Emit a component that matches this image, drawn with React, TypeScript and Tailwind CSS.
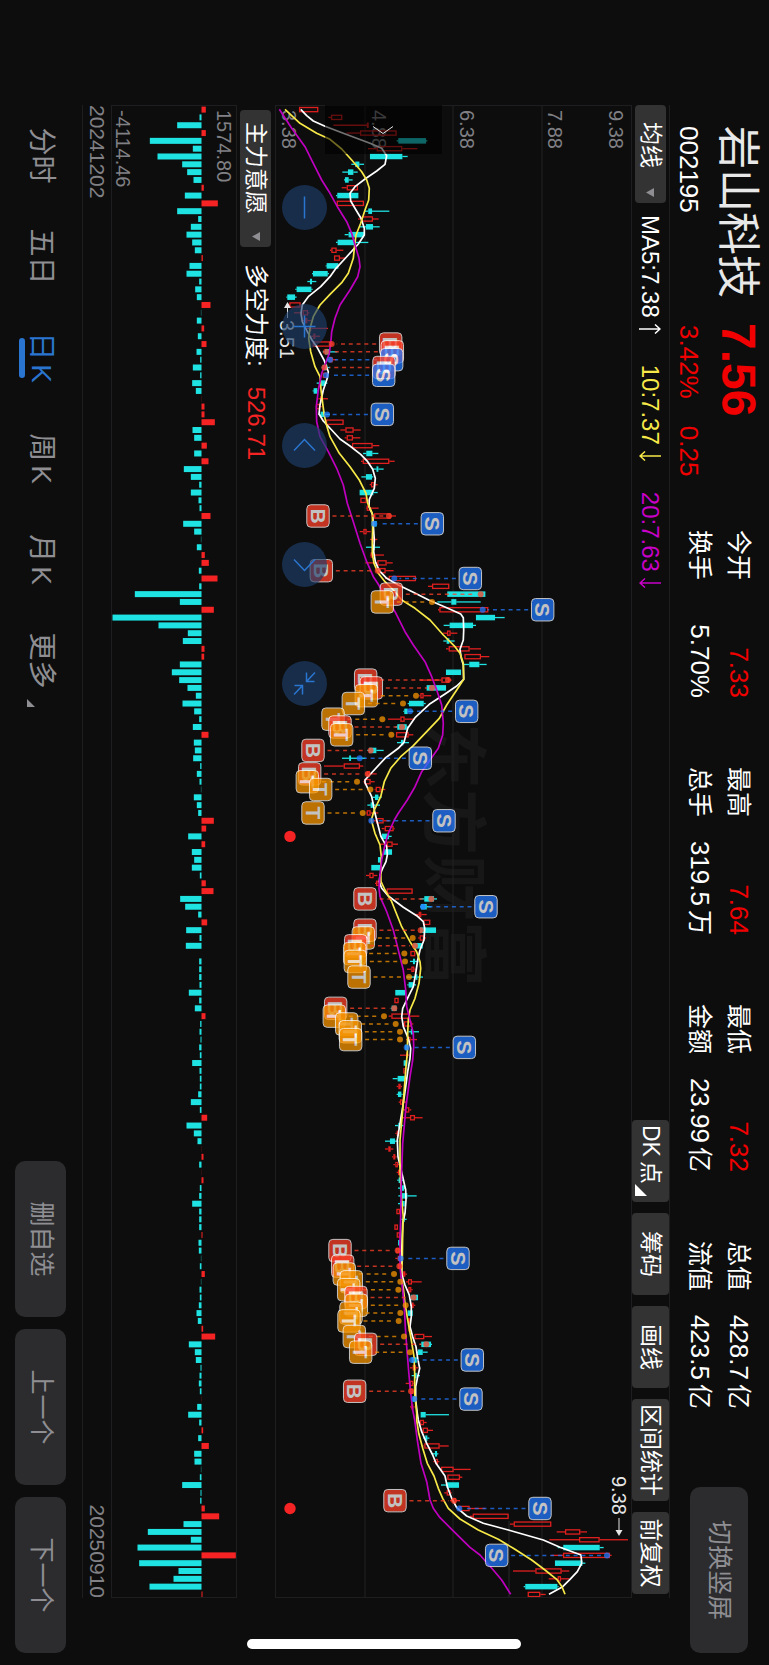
import type { ReactNode } from 'react';

type Kind = 'B' | 'S' | 'T';

const STEP = 7.815;
const CHART_W = 1493;
const CHART_H = 357;
const at = (i: number) => 4.6 + STEP * i;
const level = (p: number) => 362 - p / 3;

const UP = '#e01f1f';
const DOWN = '#1fe3e3';

// Each candle: direction, body low, body high, wick low, wick high.
const candles = `
r 87 145 87 145|r 183 217 175 217|r 292 296 190 296|r 270 380 230 380|c 385 468 380 472|r 320 397 294 442|c 300 397 300 413|c 256 268 244 282|c 234 250 217 263|c 225 236 222 248
r 230 264 215 264|c 202 265 198 265|r 200 282 200 282|c 295 306 282 358|r 275 309 264 326|c 288 309 270 329|c 236 282 224 282|c 203 257 198 295|r 184 200 180 220|r 192 210 192 226
c 170 205 167 205|c 129 173 126 177|c 120 126 112 139|c 80 124 76 128|c 52 75 49 80|r 58 92 48 92|r 98 114 72 118|r 105 112 95 123|r 120 124 110 174|r 130 136 124 150
r 128 184 128 190|c 165 180 158 202|r 178 188 170 200|c 158 172 155 180|r 158 172 158 172|c 152 166 140 172|c 131 142 128 144|r 152 156 145 174|r 138 150 138 155|c 152 165 145 180
r 168 221 168 221|r 226 251 211 272|r 230 249 224 271|r 246 308 246 328|c 289 307 279 325|r 278 358 273 374|c 320 325 308 341|c 288 306 274 310|r 303 314 299 323|c 269 310 269 323
r 271 290 271 296|r 290 300 288 326|r 312 362 305 378|c 305 320 305 320|r 280 290 269 302|r 308 315 300 322|c 308 314 288 330|r 302 308 300 342|r 322 350 286 368|r 328 347 318 371
r 356 438 345 438|r 486 538 474 538|c 532 646 532 646|c 544 559 502 632|r 508 655 504 655|c 618 675 618 704|c 539 609 521 618|r 531 542 519 562|c 530 538 520 554|r 536 599 528 633
r 583 633 583 658|c 598 628 582 650|c 528 573 528 573|r 514 538 450 545|c 470 528 470 528|r 451 461 448 484|c 417 461 413 467|c 403 413 400 430|r 391 404 354 434|c 382 410 376 415
r 378 416 378 430|c 393 400 381 417|c 297 319 292 341|c 238 243 216 286|r 221 270 162 280|r 290 300 285 320|r 283 302 280 314|r 317 332 314 346|c 315 325 308 335|c 302 312 292 330
r 290 302 288 325|r 318 341 298 358|r 344 371 335 374|c 336 357 333 365|r 350 368 330 384|c 340 366 340 366|c 324 334 324 334|c 304 330 304 330|r 298 311 288 322|r 318 326 315 333
r 350 428 350 428|c 463 492 450 501|c 453 470 450 484|r 446 454 433 470|r 460 481 460 481|c 450 498 450 498|r 449 462 445 468|c 430 458 430 458|r 421 436 421 436|c 429 435 420 445
r 424 433 411 437|c 437 442 410 459|c 416 430 412 438|c 376 405 376 405|r 373 386 373 386|c 365 380 362 380|r 364 420 356 448|r 402 425 398 430|c 424 428 415 447|r 414 422 408 441
c 405 415 405 415|r 408 414 390 418|c 401 412 401 412|r 400 408 400 408|c 383 404 368 408|r 385 392 380 396|c 384 394 380 398|r 390 400 386 408|r 405 418 398 424|r 420 435 395 458
c 385 395 375 400|r 380 388 376 392|c 360 375 345 385|r 355 362 345 370|r 370 376 366 380|r 376 384 370 390|r 384 390 380 394|c 386 396 382 400|c 390 402 384 408|c 396 412 385 440
c 390 404 384 404|r 379 390 379 390|c 398 404 394 410|r 373 384 373 384|r 380 390 380 390|c 385 390 385 390|r 378 388 378 388|r 383 392 376 398|r 384 392 384 392|r 399 406 394 411
r 414 426 408 455|r 415 424 408 428|c 423 444 423 444|r 427 431 420 436|c 413 428 413 428|r 414 420 414 420|r 415 421 415 421|r 433 463 433 486|c 454 483 450 486|c 444 458 440 473
c 425 440 425 440|r 428 438 420 445|c 433 440 425 450|r 420 430 407 435|r 420 430 420 430|c 428 438 428 438|r 424 430 420 434|c 452 467 452 537|r 450 462 446 470|r 458 474 452 489
c 466 472 460 478|r 463 509 460 536|c 495 501 487 505|r 496 504 490 508|r 513 551 513 602|r 532 570 532 577|c 530 567 513 567|r 530 542 523 545|r 548 558 540 570|r 568 599 568 646
r 608 716 600 716|r 731 844 720 844|r 885 931 860 951|r 927 989 838 1074|c 880 989 863 1001|r 879 1020 844 1025|c 855 937 855 946|r 796 875 729 898|r 863 873 836 898|c 766 862 761 866
r 773 811 773 827`
  .trim()
  .split(/[|\n]/)
  .map((row) => {
    const [dir, ...n] = row.split(' ');
    return { up: dir === 'r', v: n.map(Number) };
  });

const strength = [
  13, -6, -73, 13, -155, -26, -132, -58, -43, -24, 7, -50, 49, -73, -10, -32, -45, -28, -20, 4, -36, -45, -7, -19, -14,
  27, -2, -14, 8, -11, 15, -15, -4, -26, -4, -28, -17, 1, 9, 9, 40, -27, -22, 16, -22, 21, -53, -32, -7, -32, -9, -6,
  27, -55, -22, -2, -14, 10, 22, -8, 48, -7, -200, -65, 37, -267, -129, -41, -56, 9, 8, -65, -89, -67, -42, -17, -57,
  -22, -7, -26, 21, -23, -20, -25, -4, -14, -6, -2, -23, -14, -10, 37, 14, -40, 11, -29, -22, -29, -5, 13, 36, -64,
  -49, -10, 17, -46, -6, -47, 0, -7, -7, -7, -6, -38, -7, -20, 12, -4, -6, -3, -7, -5, -28, -6, -5, -5, -10, -32, -5,
  17, -45, -23, -12, 1, 6, -7, 1, 6, -5, -7, -28, -7, -7, -7, 3, -9, -8, -2, -5, 10, -2, -6, -5, -8, -15, -11, 5, 41,
  -38, -20, -17, -3, -6, -8, -5, 1, -13, -40, -7, 5, -10, 22, -22, -21, -2, -5, -58, -3, -4, 10, 53, -54, -161, -32,
  -192, 103, -187, -69, -84, -156, 3,
];

// Signals: kind, candle index, badge level, anchor level.
const signals: [Kind, number, number, number][] = [
  ['B', 30, 362, 185], ['B', 31, 367, 168], ['S', 32, 365, 180], ['B', 33, 342, 163], ['S', 34, 341, 168],
  ['S', 39, 337, 171], ['B', 52, 144, 357], ['S', 53, 487, 313], ['B', 59, 154, 323], ['S', 60, 601, 373],
  ['B', 62, 364, 632], ['T', 63, 337, 486], ['S', 64, 818, 638], ['B', 73, 287, 534], ['B', 74, 304, 486],
  ['T', 75, 289, 438], ['T', 76, 250, 399], ['S', 77, 590, 420], ['T', 78, 189, 337], ['B', 79, 210, 396],
  ['T', 80, 215, 364], ['B', 82, 129, 302], ['S', 83, 451, 269], ['B', 85, 119, 293], ['T', 86, 112, 261],
  ['T', 87, 152, 301], ['T', 90, 129, 278], ['S', 91, 522, 304], ['B', 101, 285, 484], ['S', 102, 648, 459],
  ['B', 105, 285, 452], ['T', 106, 280, 428], ['B', 107, 257, 435], ['T', 108, 254, 403], ['T', 109, 256, 405],
  ['T', 111, 267, 417], ['B', 115, 197, 373], ['T', 116, 193, 342], ['T', 117, 230, 377], ['T', 118, 241, 390],
  ['T', 119, 242, 390], ['S', 120, 583, 410], ['B', 146, 210, 383], ['S', 147, 564, 392], ['B', 148, 218, 388],
  ['T', 149, 223, 372], ['T', 150, 244, 391], ['T', 151, 236, 385], ['B', 152, 258, 431], ['T', 153, 259, 407],
  ['T', 154, 243, 391], ['T', 155, 237, 386], ['T', 157, 253, 402], ['B', 158, 287, 469], ['T', 159, 272, 420],
  ['S', 160, 607, 426], ['B', 164, 254, 423], ['S', 165, 603, 433], ['B', 178, 375, 552], ['S', 179, 810, 568],
  ['S', 185, 680, 1011],
];

const signalColor: Record<Kind, string> = { B: '#ff4028', S: '#2278ff', T: '#f79400' };

// Averages: start offset of each stretch, its base level, then level,offset pairs.
type Stretch = [number, number, string];
const toPoints = (stretches: Stretch[]) =>
  stretches
    .flatMap(([start, base, list]) =>
      list.split(' ').map((pair) => {
        const [p, t] = pair.split(',').map(Number);
        return `${(start + t / 3).toFixed(1)},${level(p - base).toFixed(1)}`;
      }),
    )
    .join(' ');

const ma5 = toPoints([
  [-10, 120, '212,43 230,62 250,78 285,94 340,115 420,145 455,160 470,182 465,208 440,228 405,252 375,275 360,295 362,318 378,345 393,370 403,400 403,420 385,447 350,485 318,520 300,545 272,575 235,605 217,630 213,655 217,680 232,710 246,735'],
  [235, 0, '140,20 162,60 175,95 172,115 160,150 150,195 147,222 160,243 185,270 210,297 240,318 272,343 293,365 308,388 316,415 313,445 298,478 297,500 308,525 310,555 313,600 311,635 316,665 328,692 350,715 385,735 430,757'],
  [475, 0, '476,60 530,83 572,102 580,113 581,150 580,180 570,208 574,235 580,255 581,298 560,318 525,342 478,373 435,413 413,445 402,487 385,505 345,535 285,600 285,608 305,650 315,700'],
  [715, 0, '320,0 333,50 350,80 352,105 348,125 338,145 330,165 328,185 335,205 355,228 400,262 440,287 460,305 464,325 462,360 450,390 443,420 437,460 430,500 415,530 398,565 395,590 400,620 415,655 422,685 420,715 413,755 407,800 400,850 390,910 382,960 384,1010 398,1070 407,1110'],
  [1095, 0, '408,0 405,40 398,70 396,130 394,180 396,225 405,255 418,285 424,320 424,350 420,380 428,410 438,440 443,475 449,505 443,530 437,560 437,600 442,640'],
  [1315, 120, '565,0 575,35 590,70 608,105 618,130 645,168 652,200 665,235 680,263 710,288 760,310 835,330 940,360 990,382 1053,405 1055,430 1042,455 1020,478 998,500 957,523'],
]);
const ma10 = toPoints([
  [-10, 120, '165,43 210,85 260,115 300,133 335,162 365,195 395,230 410,255 418,280 416,315 405,345 392,385 378,420 374,450 370,490 355,535 335,563 300,598 270,630 250,665 240,700 236,730'],
  [235, 0, '122,35 135,80 150,110 153,150 158,190 162,220 168,250 180,290 208,340 240,380 268,420 288,460 293,490 307,520 308,560 307,600 307,640 312,670 325,700 345,725 370,750'],
  [475, 0, '395,60 435,85 480,120 520,165 555,200 570,220 580,250 581,298 560,330 530,375 508,415 470,455 430,497 392,530 362,565 343,605 332,650 313,690'],
  [715, 0, '304,0 315,40 330,75 334,110 332,150 333,185 345,210 365,245 395,320 420,365 440,395 450,425 452,445 447,490 435,535 420,570 415,600 413,640 412,700 408,740 405,780 398,870 390,960 390,1050'],
  [1095, 0, '395,0 400,50 398,100 397,180 394,230 400,265 405,310 415,370 424,420 432,470 434,520 434,580 440,640'],
  [1315, 120, '560,0 566,40 578,85 592,130 612,168 625,205 638,235 655,265 690,297 745,330 805,358 850,385 905,420 945,450 980,478 996,500 1005,523'],
]);
const ma20 = toPoints([
  [-10, 120, '148,43 185,100 225,155 250,205 275,255 300,295 325,340 350,380 365,415 375,450 387,490 390,515 383,545 360,585 330,630 315,670 305,710'],
  [235, 0, '183,0 178,40 165,75 155,100 145,150 139,200 140,245 150,290 175,335 200,385 220,435 232,490 250,545 270,610 290,665 310,710'],
  [475, 0, '320,5 345,45 375,95 405,155 430,195 465,245 485,290 500,330 515,375 520,430 518,465 505,505 480,540 455,575 435,620 412,660 385,700'],
  [715, 0, '373,0 355,40 345,75 335,120 330,165 327,205 330,230 350,275 370,330 385,390 400,450 407,510 410,560 420,600 430,640 431,680 428,720 420,770 408,860 398,970 394,1080'],
  [1095, 0, '393,0 392,50 390,120 390,200 397,260 403,320 406,380 410,440 415,500 420,560 428,630'],
  [1315, 120, '554,0 562,60 573,130 590,185 600,240 610,265 630,293 665,328 720,382 750,405 790,450 815,480 842,523'],
]);

function Candle({ i }: { i: number }) {
  const { up, v } = candles[i];
  const [lo, hi, wl, wh] = v.map(level);
  const x = at(i);
  const color = up ? UP : DOWN;
  return (
    <g stroke={color} strokeWidth={1.3} fill={up ? 'none' : color}>
      {wh < hi && <line x1={x} x2={x} y1={wh} y2={hi} />}
      {wl > lo && <line x1={x} x2={x} y1={lo} y2={wl} />}
      <rect x={x - 2.1} y={hi + 0.6} width={4.2} height={Math.max(lo - hi - 1.2, 0.6)} />
    </g>
  );
}

function Signal({ s: [kind, i, badge, anchor] }: { s: [Kind, number, number, number] }) {
  const x = at(i);
  const b = level(badge);
  const a = level(anchor);
  const dir = Math.sign(a - b);
  const color = signalColor[kind];
  return (
    <g opacity={0.75}>
      <line x1={x} x2={x} y1={b + dir * 14.5} y2={a - dir * 5} stroke={color} strokeWidth={1.5} strokeDasharray="4 3.8" />
      <circle cx={x} cy={a} r={3} fill={color} />
      <rect x={x - 11.2} y={b - 11.2} width={22.4} height={22.4} rx={4} fill={color} stroke="#fff" />
      <text x={x} y={b + 7.3} textAnchor="middle" fontSize={21} fontWeight={700} fill="#fff">
        {kind}
      </text>
    </g>
  );
}

const gridLabels: [string, number][] = [
  ['9.38', 23],
  ['7.88', 84],
  ['6.38', 172],
  ['4.88', 260],
  ['3.38', 350],
];

function PriceChart() {
  return (
    <svg viewBox={`0 0 ${CHART_W} ${CHART_H}`} className="block h-full w-full overflow-visible" role="img" aria-label="日K">
      <text x={618} y={202} fontSize={66} fontWeight={700} fill="#171717">
        东方财富
      </text>
      {[90, 179, 267].map((y) => (
        <line key={y} x1={0} x2={CHART_W} y1={y} y2={y} stroke="#222224" />
      ))}
      <line x1={1416} x2={CHART_W} y1={123} y2={123} stroke="#2a2a2c" />
      {gridLabels.map(([t, y]) => (
        <text key={t} x={5} y={y} fontSize={20} fill="#808085">
          {t}
        </text>
      ))}
      {candles.map((_, i) => (
        <Candle key={i} i={i} />
      ))}
      <g fill="none" strokeWidth={1.7} strokeLinejoin="round">
        <polyline points={ma5} stroke="#ffffff" />
        <polyline points={ma10} stroke="#f7e948" />
        <polyline points={ma20} stroke="#bf00bf" />
      </g>
      {signals.map((s) => (
        <Signal key={s[1]} s={s} />
      ))}
      <g fill="#f52323">
        <circle cx={at(93)} cy={342} r={5.7} />
        <circle cx={at(179)} cy={342} r={5.7} />
      </g>
      <g fill="#e6e6e6" stroke="#e6e6e6">
        <text x={215} y={352} fontSize={20} stroke="none">
          3.51
        </text>
        <path d="M213 344.5H200" />
        <path d="M197 344.5l6-3.500v7z" stroke="none" />
        <text x={1371} y={20} fontSize={20} stroke="none">
          9.38
        </text>
        <path d="M1413 13H1427" />
        <path d="M1431 13l-6-3.500v7z" stroke="none" />
      </g>
    </svg>
  );
}

function StrengthChart() {
  return (
    <svg viewBox={`0 0 ${CHART_W} 126`} className="block h-full w-full" role="img" aria-label="主力意愿">
      {strength.map((s, i) => {
        const h = Math.abs(s) / 3;
        if (!h) return null;
        const up = s > 0;
        return (
          <rect
            key={i}
            x={at(i) - 3}
            y={up ? 35.5 - h : 35.5}
            width={6}
            height={h}
            fill={up ? '#f52323' : DOWN}
            opacity={h < 1 ? 0.45 : 1}
          />
        );
      })}
      <g fontSize={20} fill="#808085">
        <text x={5} y={20}>
          1574.80
        </text>
        <text x={5} y={121}>
          -4114.46
        </text>
      </g>
    </svg>
  );
}

function Picker({ label, options, className }: { label: string; options: string[]; className: string }) {
  return (
    <div className="relative flex items-center">
      <select
        aria-label={label}
        className={`h-[31px] appearance-none rounded bg-[#333333] text-[23px] leading-[31px] text-white ${className}`}
      >
        {options.map((o) => (
          <option key={o}>{o}</option>
        ))}
      </select>
      <svg viewBox="0 0 9 8" className="pointer-events-none absolute right-1.5 h-2 w-[9px]" fill="#8e8e93">
        <path d="M0 0h9L4.500 8z" />
      </svg>
    </div>
  );
}

function Average({ label, rising, className }: { label: string; rising?: boolean; className: string }) {
  return (
    <span className={`flex items-center gap-1.5 ${className}`}>
      {label}
      <svg viewBox="0 0 10 22" className="h-[22px] w-2.5 fill-none stroke-current stroke-[1.5]" aria-label={rising ? '升' : '降'}>
        <path d={rising ? 'M5 22V1M0.500 6L5 1L9.500 6' : 'M5 0V21M0.500 16L5 21L9.500 16'} />
      </svg>
    </span>
  );
}

function Stat({ label, value, unit, red }: { label: string; value: string; unit?: string; red?: boolean }) {
  return (
    <div className="flex h-[39px] items-center justify-between text-[26px] leading-[39px]">
      <dt className="text-[25px]">{label}</dt>
      <dd className={`flex gap-1 ${red ? 'text-[#f00000]' : ''}`}>
        <span>{value}</span>
        {unit && <span className="text-[25px]">{unit}</span>}
      </dd>
    </div>
  );
}

function Tool({ children, className = 'w-[82px] justify-center' }: { children: ReactNode; className?: string }) {
  return (
    <button type="button" className={`relative flex h-full items-center rounded bg-[#333333] text-[23px] ${className}`}>
      {children}
    </button>
  );
}

const grayButton = 'rounded-[10px] bg-[#2c2c2e] text-[25px] text-[#8e8e93]';

const pads: [string, ReactNode][] = [
  ['缩小', <path d="M-11 0H11" />],
  ['放大', <path d="M-11 0H11M0-11V11" />],
  ['左移', <path d="M5-10.500L-6 0L5 10.500" />],
  ['右移', <path d="M-5-10.500L6 0L-5 10.500" />],
  ['退出全屏', <path d="M-11-10.500L-2-2M-2-10V-2H-11M11 10.500L2 2M2 10V2H11" />],
];

const periods: [string, string][] = [
  ['分时', ''],
  ['五日', ''],
  ['日', 'K'],
  ['周', 'K'],
  ['月', 'K'],
  ['更多', ''],
];

export default function App() {
  return (
    <div className="h-screen w-screen overflow-hidden bg-[#0d0d0d]">
      <div className="relative flex h-[100vw] w-[100vh] origin-top-left translate-x-[100vw] rotate-90 flex-col overflow-hidden bg-[#0d0d0d] font-['Liberation_Sans','Noto_Sans_CJK_SC',sans-serif] text-white">
        <header className="flex h-[99px] shrink-0 items-start pr-3 pl-[126px]">
          <div className="w-[197px]">
            <h1 className="mt-2 h-[46px] text-[43px] leading-[46px] font-normal text-[#e8e8e8]">岩山科技</h1>
            <p className="mt-3 text-[26px] leading-7">002195</p>
          </div>
          <div className="w-[207px] text-[#f00000]">
            <p className="mt-2 h-[46px] text-[48px] leading-[46px] font-bold">7.56</p>
            <p className="mt-3 flex gap-[27px] pl-0.5 text-[26px] leading-7">
              <span>3.42%</span>
              <span>0.25</span>
            </p>
          </div>
          <dl className="mt-[11px] grid grid-cols-[repeat(4,168px)] gap-x-[69px]">
            <Stat label="今开" value="7.33" red />
            <Stat label="最高" value="7.64" red />
            <Stat label="最低" value="7.32" red />
            <Stat label="总值" value="428.7" unit="亿" />
            <Stat label="换手" value="5.70%" />
            <Stat label="总手" value="319.5" unit="万" />
            <Stat label="金额" value="23.99" unit="亿" />
            <Stat label="流值" value="423.5" unit="亿" />
          </dl>
          <button type="button" className={`mt-[21px] ml-auto h-[58px] w-[166px] ${grayButton}`}>
            切换竖屏
          </button>
        </header>

        <main className="mr-[67px] ml-[105px] shrink-0">
          <div className="flex h-[38px] items-center border-t border-[#1e1e20]">
            <Picker label="指标" options={['均线', 'BOLL']} className="w-[98px] pl-[17px]" />
            <p className="ml-3 flex gap-[31px] text-[24px] leading-[37px]">
              <Average label="MA5:7.38" rising className="text-white" />
              <Average label="10:7.37" className="text-[#f7e948]" />
              <Average label="20:7.63" className="text-[#c800c8]" />
            </p>
            <div className="mr-1 ml-auto flex h-full gap-[11px]">
              <Tool className="w-[82px] gap-1 pl-[5px]">
                <span>DK</span>
                <span>点</span>
                <svg viewBox="0 0 12 12" className="absolute right-1.5 bottom-[3px] size-3" fill="#fff">
                  <path d="M12 0V12H0z" />
                </svg>
              </Tool>
              <Tool>筹码</Tool>
              <Tool>画线</Tool>
              <Tool className="w-[102px] justify-center">区间统计</Tool>
              <Tool>前复权</Tool>
            </div>
          </div>

          <div className="relative h-[357px] outline outline-[#1e1e20] -outline-offset-1">
            <PriceChart />
            <button
              type="button"
              aria-label="展开"
              className="absolute top-[190px] left-0 flex h-[117px] w-[49px] items-center justify-center bg-black/55"
            >
              <svg viewBox="0 0 8 22" className="h-[22px] w-2 fill-none stroke-[#e6e6e6]">
                <path d="M0.500 1L7.500 11L0.500 21" />
              </svg>
            </button>
            <div className="absolute top-[305px] left-[80px] flex gap-[74px]">
              {pads.map(([name, icon]) => (
                <button key={name} type="button" aria-label={name} className="size-[45px] rounded-full bg-[#1d3f6b]/65">
                  <svg viewBox="-22.5 -22.5 45 45" className="size-full fill-none stroke-[#2a75cf] stroke-[1.5]">
                    {icon}
                  </svg>
                </button>
              ))}
            </div>
          </div>

          <div className="flex h-[38px] items-center pl-[5px]">
            <Picker label="副图指标" options={['主力意愿', 'MACD']} className="w-[137px] pl-[12px]" />
            <p className="ml-[17px] text-[24px]">多空力度:</p>
            <p className="ml-5 text-[24px] text-[#f52323]">526.71</p>
          </div>

          <div className="h-[126px] outline outline-[#1e1e20] -outline-offset-1">
            <StrengthChart />
          </div>
          <div className="flex h-[29px] items-center justify-between border-b border-[#1e1e20] text-[21px] text-[#808085]">
            <time>20241202</time>
            <time>20250910</time>
          </div>
        </main>

        <footer className="flex flex-1 items-center justify-between pr-3 pl-[105px]">
          <nav className="flex text-[28px] text-[#8e8e93]">
            {periods.map(([t, k]) => {
              const active = t === '日';
              return (
                <button
                  key={t}
                  type="button"
                  className={`relative flex h-12 w-[101px] items-center justify-center gap-1 ${active ? 'text-[#2a75cf]' : ''}`}
                >
                  <span>{t}</span>
                  {k && <span>{k}</span>}
                  {active && <span className="absolute bottom-0.5 left-[31px] h-1.5 w-10 rounded-full bg-[#2a75cf]" />}
                  {t === '更多' && (
                    <svg viewBox="0 0 8 8" className="absolute right-1 bottom-2.5 size-2" fill="#8e8e93">
                      <path d="M8 0V8H0z" />
                    </svg>
                  )}
                </button>
              );
            })}
          </nav>
          <div className="flex gap-3">
            {['删自选', '上一个', '下一个'].map((t) => (
              <button key={t} type="button" className={`h-[51px] w-[156px] ${grayButton}`}>
                {t}
              </button>
            ))}
          </div>
        </footer>

        <div className="absolute top-[248px] right-4 h-[274px] w-2.5 rounded-full bg-white" />
      </div>
    </div>
  );
}
